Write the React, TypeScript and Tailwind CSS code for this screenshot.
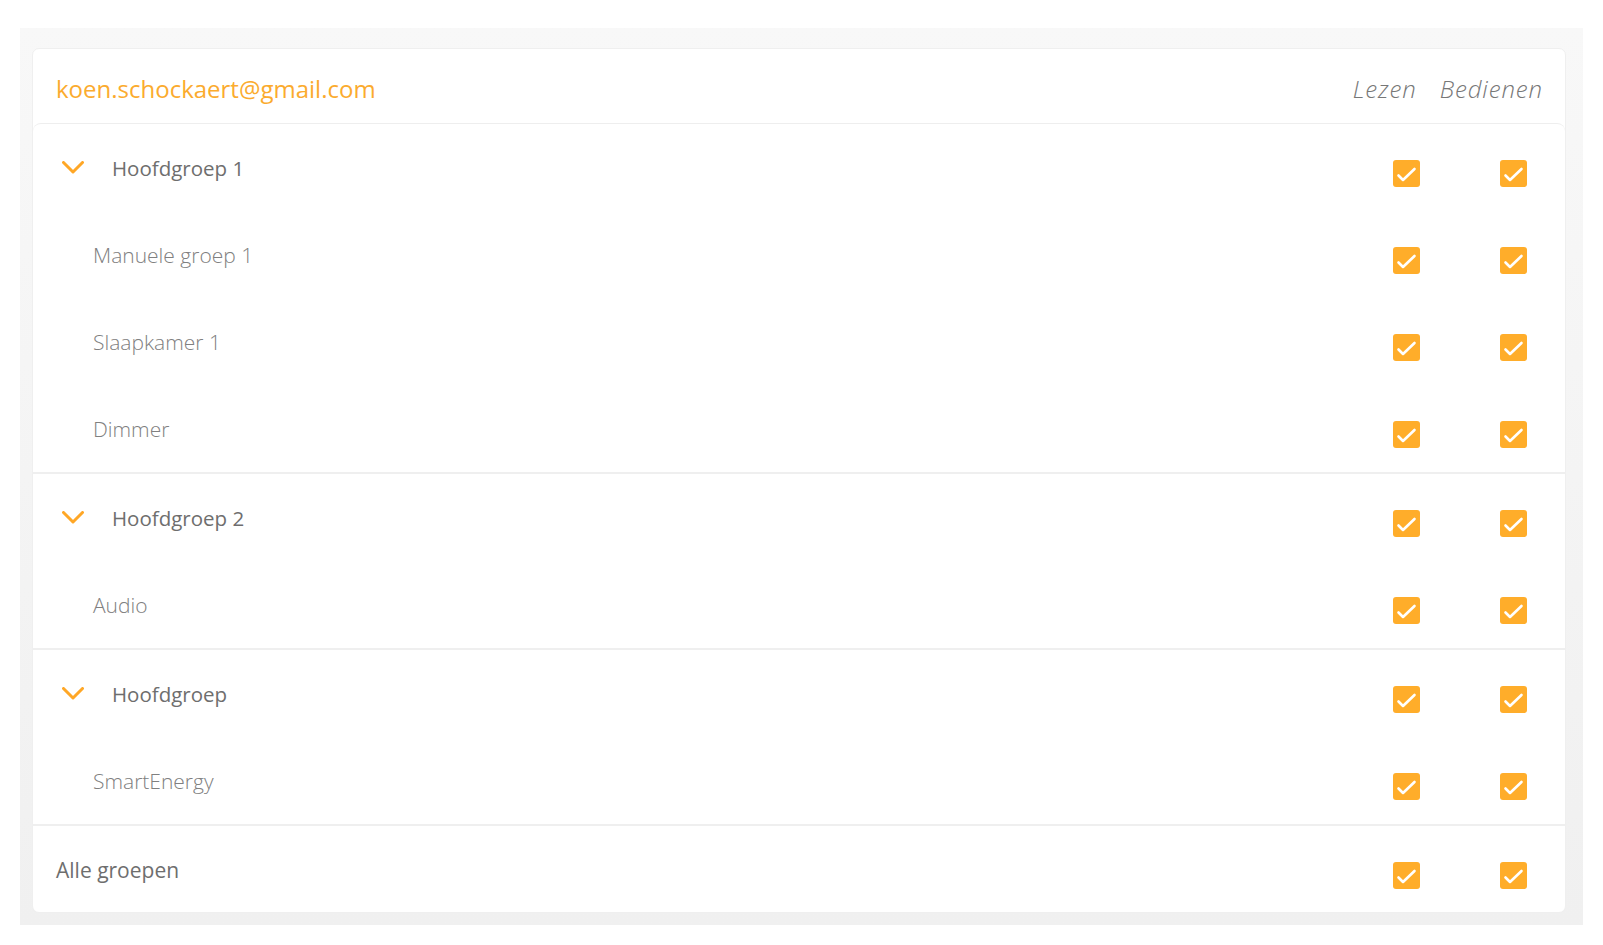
import React from "react";

const Check = () => (
  <div className="w-[27px] h-[27px] rounded-[3px] bg-[#ffad2a] flex-none">
    <svg width="27" height="27" viewBox="0 0 27 27" fill="none">
      <path d="M5.5 15.5 L10 20 L21.5 9" stroke="#ffffff" strokeWidth="2.6" strokeLinecap="round" strokeLinejoin="round" />
    </svg>
  </div>
);

const Chevron = () => (
  <svg width="22" height="13" viewBox="0 0 22 13" fill="none" className="flex-none">
    <path d="M1.5 1.5 L11 11 L20.5 1.5" stroke="#ffa726" strokeWidth="3" strokeLinecap="round" strokeLinejoin="round" />
  </svg>
);

const Checks = () => (
  <div className="ml-auto flex gap-[80px] mt-[36px] mr-[38px]">
    <Check />
    <Check />
  </div>
);

const GroupRow = ({ label }: { label: string }) => (
  <div className="flex items-start h-[87px]">
    <div className="ml-[29px] mt-[37px]">
      <Chevron />
    </div>
    <div className="ml-[28px] mt-[30px] text-[20.5px] leading-[28px] text-[#6e6e6e]">{label}</div>
    <Checks />
  </div>
);

const SubRow = ({ label }: { label: string }) => (
  <div className="flex items-start h-[87px]">
    <div className="ml-[60px] mt-[30px] text-[21px] leading-[28px] font-light text-[#808080]">{label}</div>
    <Checks />
  </div>
);

const sections = [
  { group: "Hoofdgroep 1", items: ["Manuele groep 1", "Slaapkamer 1", "Dimmer"] },
  { group: "Hoofdgroep 2", items: ["Audio"] },
  { group: "Hoofdgroep", items: ["SmartEnergy"] },
];

export default function App() {
  return (
    <div
      className="w-[1603px] h-[945px] bg-white overflow-hidden"
      style={{ fontFamily: '"Open Sans", "Noto Sans", sans-serif' }}
    >
      <div className="ml-[20px] mt-[28px] w-[1563px] h-[897px] bg-gradient-to-b from-[#f8f8f8] to-[#f0f0f0] pt-[20px] pl-[12px] pr-[17px]">
        <div className="bg-white rounded-[7px] border border-[#efefef]">
          <div className="flex items-start h-[74px]">
            <div className="ml-[23px] mt-[24px] text-[24px] leading-[32px] text-[#fbab2e]">
              koen.schockaert@gmail.com
            </div>
            <div className="ml-auto mr-[22px] mt-[24px] flex gap-[23px] text-[24px] leading-[32px] tracking-[0.9px] italic font-light text-[#777777]">
              <span>Lezen</span>
              <span>Bedienen</span>
            </div>
          </div>
          <div className="border-t border-[#eeeeee] rounded-t-[8px]">
            {sections.map((s, i) => (
              <div key={s.group} className={i > 0 ? "border-t-2 border-[#efefef]" : ""}>
                <GroupRow label={s.group} />
                {s.items.map((it) => (
                  <SubRow key={it} label={it} />
                ))}
              </div>
            ))}
            <div className="border-t-2 border-[#efefef] flex items-start h-[88px]">
              <div className="ml-[23px] mt-[30px] text-[21px] leading-[28px] text-[#6e6e6e]">Alle groepen</div>
              <Checks />
            </div>
          </div>
        </div>
      </div>
    </div>
  );
}
